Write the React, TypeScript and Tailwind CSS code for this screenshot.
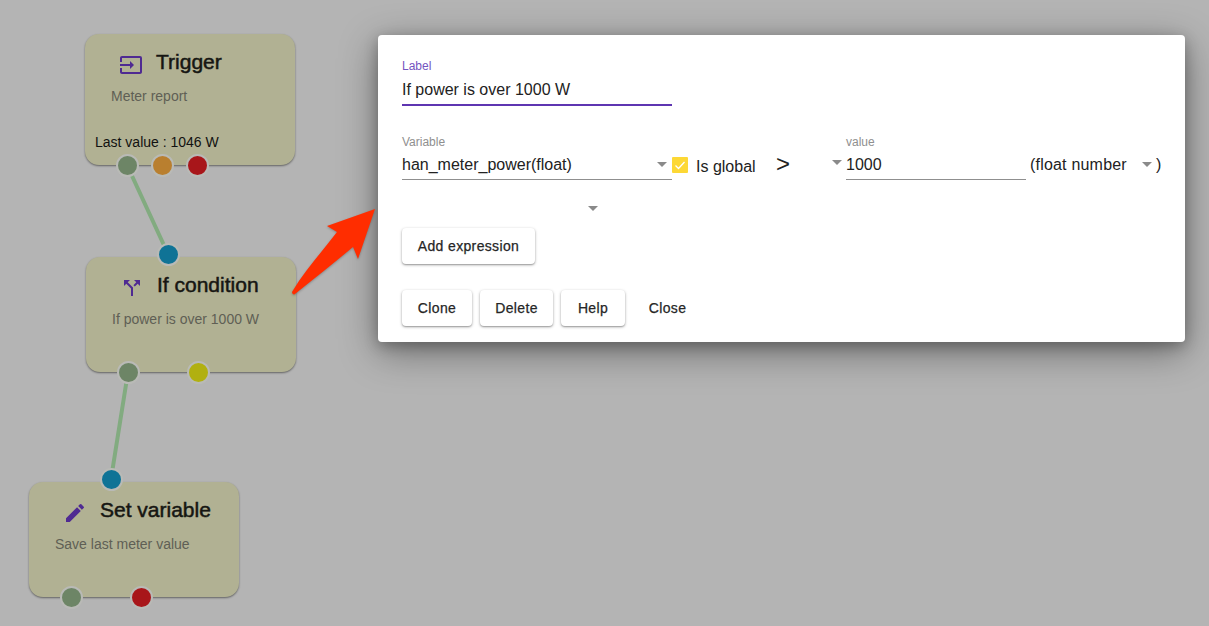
import type { ReactNode } from "react";
import { MdInput, MdCallSplit, MdEdit } from "react-icons/md";

const BLUE = "bg-[#0f7396]";
const GREEN = "bg-[#6d8566]";
const ORANGE = "bg-[#b97f2f]";
const RED = "bg-[#a8161a]";
const YELLOW = "bg-[#b1b010]";

function Dot({ color, x, y }: { color: string; x: number; y: number }) {
  return (
    <div
      className={`absolute h-[23px] w-[23px] rounded-full border-2 border-[#b9bab6] ${color}`}
      style={{ left: x - 11.5, top: y - 11.5 }}
    />
  );
}

interface NodeCardProps {
  x: number;
  y: number;
  height: number;
  icon: ReactNode;
  title: string;
  text: string;
  footer?: string;
}

function NodeCard({ x, y, height, icon, title, text, footer }: NodeCardProps) {
  return (
    <div
      className="absolute w-[210px] rounded-[14px] bg-[#b1b193] shadow-[0_1px_2px_rgba(0,0,0,0.45)]"
      style={{ left: x, top: y, height }}
    >
      <div className="flex h-[56px] items-center pl-[34px] pb-[1px]">
        <span className="mt-[6px] flex w-[37px] text-[#4f2a92]">{icon}</span>
        <span className="text-[21px] text-[#161612] [-webkit-text-stroke:0.5px_#161612]">{title}</span>
      </div>
      <div className="-mt-[2px] pl-[26px] text-[14px] leading-[16px] text-[#5f5f55]">{text}</div>
      {footer && <div className="pl-[10px] pt-[30px] text-[14px] leading-[16px] text-[#111]">{footer}</div>}
    </div>
  );
}

function Caret({ className = "" }: { className?: string }) {
  return (
    <span
      className={`h-0 w-0 border-x-[5px] border-t-[5px] border-x-transparent border-t-[#8a8a8a] ${className}`}
    />
  );
}

function Btn({ children, className = "" }: { children: ReactNode; className?: string }) {
  return (
    <button
      type="button"
      className={`h-[36px] rounded-[4px] bg-white text-[14px] tracking-[0.35px] text-[#262626] [-webkit-text-stroke:0.25px_#262626] shadow-[0_1px_3px_rgba(0,0,0,0.35),0_1px_1px_rgba(0,0,0,0.14)] ${className}`}
    >
      {children}
    </button>
  );
}

function Dialog() {
  return (
    <div className="absolute left-[378px] top-[35px] h-[307px] w-[807px] rounded-[4px] bg-white pl-[24px] pt-[24px] shadow-[0_10px_38px_rgba(0,0,0,0.4),0_4px_14px_rgba(0,0,0,0.25)]">
      <div className="h-[47px] w-[270px] border-b-2 border-[#5e35b1]">
        <div className="text-[12px] leading-[14px] text-[#7455c0]">Label</div>
        <div className="pt-[7px] text-[16px] leading-[20px] text-[#222]">If power is over 1000 W</div>
      </div>

      <div className="flex pt-[29px]">
        <div className="h-[45px] w-[270px] border-b border-[#8f8f8f]">
          <div className="text-[12px] leading-[14px] text-[#8f8f8f]">Variable</div>
          <div className="flex items-center justify-between pt-[6px] pr-[5px] text-[16px] leading-[20px] text-[#222]">
            <span>han_meter_power(float)</span>
            <Caret className="-mt-[2px]" />
          </div>
        </div>
        <div className="mt-[22px] h-[16px] w-[16px] rounded-[1px] bg-[#fdd835] text-white">
          <svg viewBox="0 0 16 16" className="h-[16px] w-[16px]" fill="none" stroke="currentColor" strokeWidth="1.3">
            <path d="M3.5 8.5l3 3 6-6.5" />
          </svg>
        </div>
        <div className="w-[88px] pl-[8px] pt-[22px] text-[16px] leading-[20px] text-[#222]">Is global</div>
        <div className="w-[56px] pt-[15px] text-[24px] leading-[28px] text-[#222]">&gt;</div>
        <Caret className="mt-[25px] mr-[4px]" />
        <div className="h-[45px] w-[180px] border-b border-[#8f8f8f]">
          <div className="text-[12px] leading-[14px] text-[#8f8f8f]">value</div>
          <div className="pt-[6px] text-[16px] leading-[20px] text-[#222]">1000</div>
        </div>
        <div className="mt-[20px] flex h-[20px] items-center pl-[4px] text-[16px] leading-[20px] text-[#222]">
          <span className="w-[112px] tracking-[0.2px]">(float number</span>
          <Caret className="-mt-[1px]" />
          <span className="pl-[4px]">)</span>
        </div>
      </div>

      <div className="flex h-[48px] w-[196px] justify-end pt-[26px]">
        <Caret />
      </div>

      <Btn className="w-[133px]">Add expression</Btn>

      <div className="flex gap-[8px] pt-[26px]">
        <Btn className="w-[70px]">Clone</Btn>
        <Btn className="w-[73px]">Delete</Btn>
        <Btn className="w-[64px]">Help</Btn>
        <button
          type="button"
          className="h-[36px] w-[69px] text-[14px] tracking-[0.35px] text-[#262626] [-webkit-text-stroke:0.25px_#262626]"
        >
          Close
        </button>
      </div>
    </div>
  );
}

export default function App() {
  return (
    <div className="relative h-[626px] w-[1209px] overflow-hidden bg-[#b4b4b4] font-['Liberation_Sans',Arial,sans-serif]">
      <NodeCard
        x={85}
        y={34}
        height={131}
        icon={<MdInput size={24} />}
        title="Trigger"
        text="Meter report"
        footer="Last value : 1046 W"
      />
      <NodeCard x={86} y={257} height={115} icon={<MdCallSplit size={24} />} title="If condition" text="If power is over 1000 W" />
      <NodeCard x={29} y={482} height={115} icon={<MdEdit size={24} />} title="Set variable" text="Save last meter value" />

      <svg className="absolute left-0 top-0" width="1209" height="626" fill="none">
        <path d="M127 165L168 254M128 372L111 479" stroke="#82ab80" strokeWidth="4" />
      </svg>

      <Dot color={GREEN} x={127} y={165} />
      <Dot color={ORANGE} x={162} y={165} />
      <Dot color={RED} x={197} y={165} />
      <Dot color={BLUE} x={168} y={254} />
      <Dot color={GREEN} x={128} y={372} />
      <Dot color={YELLOW} x={198} y={372} />
      <Dot color={BLUE} x={111} y={479} />
      <Dot color={GREEN} x={71} y={597} />
      <Dot color={RED} x={141} y={597} />

      <Dialog />

      <svg className="absolute left-0 top-0 drop-shadow-[0_1px_1px_rgba(0,0,0,0.25)]" width="1209" height="626">
        <path d="M375 209L327 226L337 232C322 252 305 270 292 292C292 294 294 295 295 294C315 278 335 262 353 247L358 259Z" fill="#ff2d00" />
      </svg>
    </div>
  );
}
